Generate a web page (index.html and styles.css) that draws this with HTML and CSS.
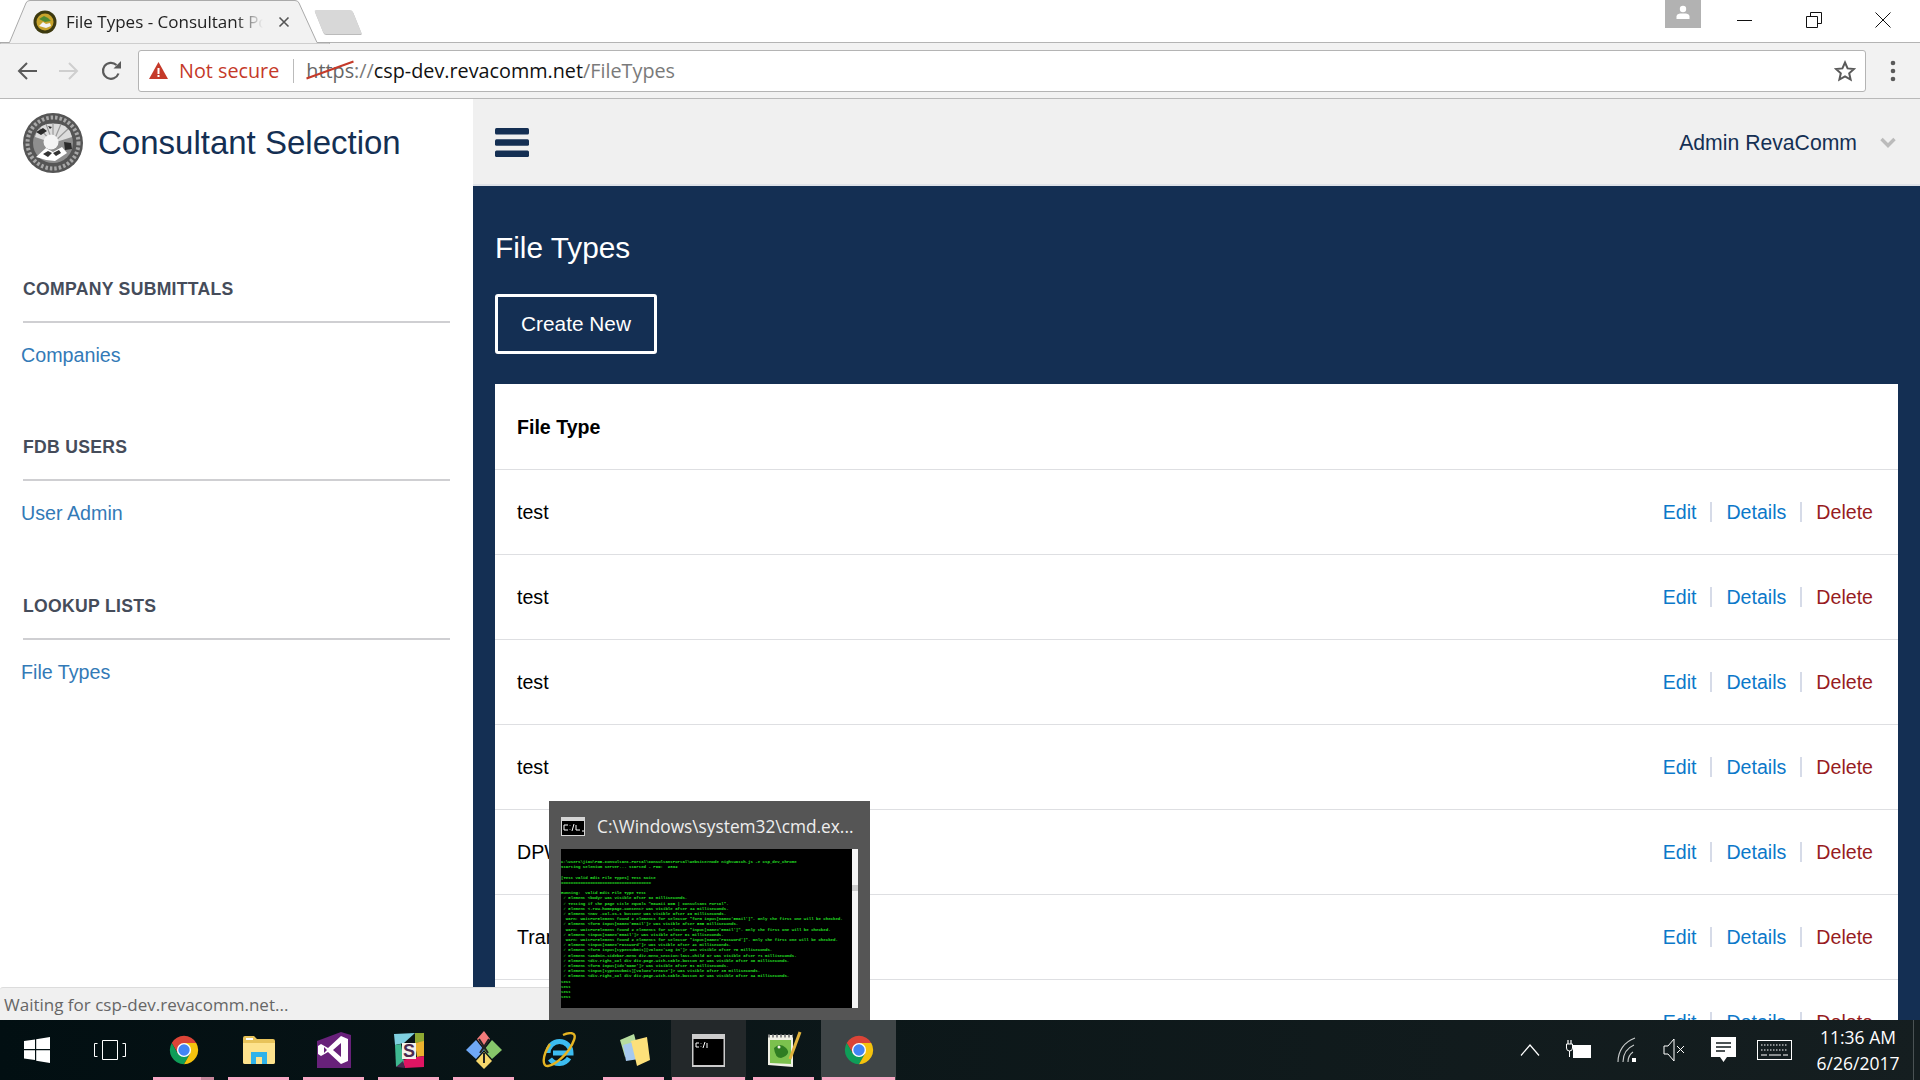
FILE: index.html
```html
<!DOCTYPE html>
<html lang="en">
<head>
  <meta charset="UTF-8">
  <title>File Types - Consultant Portal</title>
  <link rel="stylesheet" href="styles.css">
</head>
<body>
  <svg class="defs" width="0" height="0">
    <symbol id="chrome" viewBox="0 0 48 48">
      <path fill="#db4437" d="M6.68 14A20 20 0 0 1 41.32 14H24L15.34 29Z"/>
      <path fill="#0f9d58" d="M6.68 14A20 20 0 0 0 24 44L32.66 29H15.34Z"/>
      <path fill="#f4c20d" d="M41.32 14A20 20 0 0 1 24 44L32.66 29 24 14Z"/>
      <circle cx="24" cy="24" r="10" fill="#fff"/>
      <circle cx="24" cy="24" r="8" fill="#4285f4"/>
    </symbol>
  </svg>

  <div class="screen">
    <!-- Browser tabs -->
    <div class="tabstrip">
      <div class="tab">
        <svg class="tab-shape" width="330" height="44" viewBox="0 0 330 44">
          <path fill="#f2f2f2" stroke="#aaa" d="M0 42.5H9.5L26 3Q27 .5 30 .5H295Q298 .5 299 3L317 42.5H330V44H0Z"/>
        </svg>
        <svg class="favicon" width="24" height="24" viewBox="0 0 24 24">
          <circle cx="12" cy="12" r="11.5" fill="#3d3a10"/>
          <circle cx="12" cy="12" r="8.5" fill="#c9a42c"/>
          <path fill="#4f8a33" d="M6 9l5-3 4 2 3 3-6 1z"/>
          <path fill="#f3f3f3" d="M6 16l4-4 3 2 4-1 1 3-5 2z"/>
        </svg>
        <span class="tab-title">File Types - Consultant Portal</span>
        <svg class="tab-close" width="12" height="12" viewBox="0 0 12 12"><path d="M1.5 1.5l9 9M10.5 1.5l-9 9" stroke="#555" stroke-width="1.6"/></svg>
      </div>
      <div class="newtab"></div>
      <div class="spacer"></div>
      <div class="profile">
        <svg width="16" height="14" viewBox="0 0 16 14"><circle cx="8" cy="4" r="3.2" fill="#fff"/><path fill="#fff" d="M1.5 14V11.5Q1.5 9 5 8.5H11Q14.5 9 14.500 11.5V14Z"/></svg>
      </div>
      <div class="winbtns">
        <svg width="16" height="16" viewBox="0 0 16 16"><path d="M0 8.5H15" stroke="#111"/></svg>
        <svg width="16" height="16" viewBox="0 0 16 16"><path d="M.5 4.5H11.5V15.5H.5ZM4.5 4.5V.5H15.5V11.5H11.5" fill="none" stroke="#111"/></svg>
        <svg width="16" height="16" viewBox="0 0 16 16"><path d="M.5.5L15.5 15.5M15.5.5L.5 15.5" stroke="#111"/></svg>
      </div>
    </div>

    <!-- Browser toolbar -->
    <div class="toolbar">
      <svg class="nav-icon" width="22" height="22" viewBox="0 0 22 22"><path d="M21 11H3M11 3l-8 8 8 8" fill="none" stroke="#5a5a5a" stroke-width="2"/></svg>
      <svg class="nav-icon" width="22" height="22" viewBox="0 0 22 22"><path d="M1 11H19M11 3l8 8-8 8" fill="none" stroke="#cfcfcf" stroke-width="2"/></svg>
      <svg class="nav-icon" width="22" height="22" viewBox="0 0 22 22"><path d="M18.5 13.5A8 8 0 1 1 16.5 5" fill="none" stroke="#5a5a5a" stroke-width="2.2"/><path fill="#5a5a5a" d="M13.5 8.5H21V1Z"/></svg>
      <div class="omnibox">
        <svg width="19" height="17" viewBox="0 0 19 17"><path fill="#c53929" d="M9.5 0L19 17H0Z"/><path fill="#fff" d="M8.5 6h2v6h-2zM8.5 13h2v2h-2z"/></svg>
        <span class="not-secure">Not secure</span>
        <span class="omni-sep"></span>
        <span class="url"><span class="scheme">https</span><span class="dim">://</span>csp-dev.revacomm.net<span class="dim">/FileTypes</span></span>
        <svg class="star" width="22" height="22" viewBox="0 0 22 22"><path d="M11 2.5l2.6 5.9 6.4.6-4.8 4.3 1.4 6.3L11 16.4l-5.6 3.2 1.4-6.3L2 9l6.4-.6z" fill="none" stroke="#5a5a5a" stroke-width="2"/></svg>
      </div>
      <svg class="menu-dots" width="6" height="22" viewBox="0 0 6 22"><circle cx="3" cy="3" r="2.3" fill="#5a5a5a"/><circle cx="3" cy="11" r="2.3" fill="#5a5a5a"/><circle cx="3" cy="19" r="2.3" fill="#5a5a5a"/></svg>
    </div>

    <!-- The page -->
    <div class="page">
      <aside class="sidebar">
        <div class="brand">
          <svg class="seal" width="60" height="60" viewBox="0 0 60 60">
            <circle cx="30" cy="30" r="30" fill="#555"/>
            <circle cx="30" cy="30" r="25.500" fill="none" stroke="#a8a8a8" stroke-width="4" stroke-dasharray="2.500 2"/>
            <circle cx="30" cy="30" r="20" fill="#8e8e8e"/>
            <path fill="#dcdcdc" d="M30 30L12 24 14 18 19 13 24 11 36 11 42 13 47 18 49 24Z"/>
            <path d="M30 30L16 15M30 30L23 11M30 30L30 10M30 30L38 11M30 30L45 16" stroke="#9a9a9a" stroke-width="1.2"/>
            <path fill="#2b2b2b" d="M13 19l7-4 4 3-6 4zM25 13l4 1-2 2zM41 29l7 1 1 6-7 1z"/>
            <circle cx="28" cy="29" r="7.500" fill="#f4f4f4"/>
            <path fill="#fff" d="M13 44l10-9 7 4 9-5 5 6-12 8-9-1z"/>
            <path fill="#333" d="M20 41l5-3 4 2-4 4zM30 40l6-3 2 3-5 3z"/>
          </svg>
          <span class="brand-name">Consultant Selection</span>
        </div>

        <section class="nav-section">
          <h3>COMPANY SUBMITTALS</h3>
          <a href="#">Companies</a>
        </section>
        <section class="nav-section">
          <h3>FDB USERS</h3>
          <a href="#">User Admin</a>
        </section>
        <section class="nav-section">
          <h3>LOOKUP LISTS</h3>
          <a href="#">File Types</a>
        </section>
      </aside>

      <main class="main">
        <div class="topbar">
          <svg class="burger" width="34" height="29" viewBox="0 0 34 29">
            <rect width="34" height="6.4" rx="1.5" fill="#142f53"/>
            <rect y="11.3" width="34" height="6.4" rx="1.5" fill="#142f53"/>
            <rect y="22.6" width="34" height="6.4" rx="1.5" fill="#142f53"/>
          </svg>
          <span class="user-name">Admin RevaComm</span>
          <svg class="user-chevron" width="16" height="11" viewBox="0 0 16 11"><path d="M1.5 2l6.5 6.5L14.5 2" fill="none" stroke="#bbb" stroke-width="3.4"/></svg>
        </div>

        <div class="content">
          <h1>File Types</h1>
          <a class="btn-create" href="#">Create New</a>

          <div class="card">
            <div class="row row-head">File Type</div>
            <div class="row"><span>test</span><span class="actions"><a href="#">Edit</a><i></i><a href="#">Details</a><i></i><a class="del" href="#">Delete</a></span></div>
            <div class="row"><span>test</span><span class="actions"><a href="#">Edit</a><i></i><a href="#">Details</a><i></i><a class="del" href="#">Delete</a></span></div>
            <div class="row"><span>test</span><span class="actions"><a href="#">Edit</a><i></i><a href="#">Details</a><i></i><a class="del" href="#">Delete</a></span></div>
            <div class="row"><span>test</span><span class="actions"><a href="#">Edit</a><i></i><a href="#">Details</a><i></i><a class="del" href="#">Delete</a></span></div>
            <div class="row"><span>DPW</span><span class="actions"><a href="#">Edit</a><i></i><a href="#">Details</a><i></i><a class="del" href="#">Delete</a></span></div>
            <div class="row"><span>Transcript</span><span class="actions"><a href="#">Edit</a><i></i><a href="#">Details</a><i></i><a class="del" href="#">Delete</a></span></div>
            <div class="row"><span></span><span class="actions"><a href="#">Edit</a><i></i><a href="#">Details</a><i></i><a class="del" href="#">Delete</a></span></div>
          </div>
        </div>
      </main>
    </div>

    <!-- Status bubble -->
    <div class="status">Waiting for csp-dev.revacomm.net...</div>

    <!-- Taskbar thumbnail -->
    <div class="preview">
      <div class="preview-title">
        <svg width="24" height="19" viewBox="0 0 24 19">
          <rect width="24" height="19" fill="#d5d5d5"/>
          <rect x="1" y="4" width="22" height="14" fill="#000"/>
          <path d="M3 8H7M3 8V13H7M9 8.500V9M9 12V12.500M13 7L11 14M15 8V13H19M21 14H23" stroke="#fff" fill="none"/>
        </svg>
        <span>C:\Windows\system32\cmd.ex...</span>
      </div>
      <div class="console">
        <pre>c:\Users\jiau\POB-Consultant-Portal\ConsultantPortal\Website>node nightwatch.js -e csp_dev_chrome
Starting selenium server... started - PID:  2892

[Test Valid Edit File Types] Test Suite
=====================================

Running:  Valid Edit File Type Test
 ✓ Element &lt;body&gt; was visible after 93 milliseconds.
 ✓ Testing if the page title equals "Hawaii DOB | Consultant Portal".
 ✓ Element &lt;.row.homepage-content&gt; was visible after 34 milliseconds.
 ✓ Element &lt;nav .col-xs-1 button&gt; was visible after 29 milliseconds.
  Warn: WaitForElement found 2 elements for selector "form input[name='Email']". Only the first one will be checked.
 ✓ Element &lt;form input[name='Email']&gt; was visible after 585 milliseconds.
  Warn: WaitForElement found 2 elements for selector "input[name='Email']". Only the first one will be checked.
 ✓ Element &lt;input[name='Email']&gt; was visible after 61 milliseconds.
  Warn: WaitForElement found 2 elements for selector "input[name='Password']". Only the first one will be checked.
 ✓ Element &lt;input[name='Password']&gt; was visible after 41 milliseconds.
 ✓ Element &lt;form input[type=submit][value='Log in']&gt; was visible after 70 milliseconds.
 ✓ Element &lt;#admin-sidebar-menu div.menu_section:last-child a&gt; was visible after 71 milliseconds.
 ✓ Element &lt;div.right_col div div.page-with-table-button a&gt; was visible after 30 milliseconds.
 ✓ Element &lt;form input[id='Name']&gt; was visible after 81 milliseconds.
 ✓ Element &lt;input[type=submit][value='Create']&gt; was visible after 38 milliseconds.
 ✓ Element &lt;div.right_col div div.page-with-table-button a&gt; was visible after 34 milliseconds.
test
test
test
test</pre>
        <div class="console-scroll"><span class="console-thumb"></span></div>
      </div>
    </div>

    <!-- Windows taskbar -->
    <footer class="taskbar">
      <div class="sys-btn">
        <svg width="26" height="26" viewBox="0 0 26 26"><path fill="#fff" d="M0 4l11-1.6V12H0zM12.2 2.2L26 0V12H12.2zM0 13.2H11V23L0 21.4zM12.2 13.2H26V26L12.2 23.8z"/></svg>
      </div>
      <div class="sys-btn">
        <svg width="32" height="20" viewBox="0 0 32 20"><path d="M8.5.5H23.5V19.5H8.5ZM3.5 3.5H.5V16.5H3.5M28.5 3.5H31.5V16.5H28.5" fill="none" stroke="#fff"/></svg>
      </div>

      <div class="app running stacked">
        <svg width="34" height="34"><use href="#chrome"/></svg>
      </div>
      <div class="app running">
        <svg width="32" height="28" viewBox="0 0 32 28">
          <path fill="#e8c35a" d="M0 2Q0 0 2 0H11L14 3H30Q32 3 32 5V26Q32 28 30 28H2Q0 28 0 26Z"/>
          <path fill="#fde28d" d="M0 7H32V26Q32 28 30 28H2Q0 28 0 26Z"/>
          <path fill="#fff" d="M3 2H10V4H3Z"/>
          <path fill="#2fb2ea" d="M8 28V16H24V28H19V21H13V28Z"/>
        </svg>
      </div>
      <div class="app running">
        <svg width="34" height="36" viewBox="0 0 34 36">
          <path fill="#68217a" d="M0 9L24 0 34 3V36H0Z"/>
          <path fill="#fff" d="M4 12L11 16 24 4 31 7V29L24 32 11 20 4 24 1 22V14ZM7 15V21L10 18ZM24 11L16 18 24 25Z"/>
        </svg>
      </div>
      <div class="app running">
        <svg width="32" height="36" viewBox="0 0 32 36">
          <path fill="#7fd0e0" d="M1 2L22 1 11 11 2 13Z"/>
          <path fill="#8ea832" d="M22 1L31 1V10L22 11Z"/>
          <path fill="#ecb22e" d="M22 11L31 9V24L24 25Z"/>
          <path fill="#e01563" d="M9 28L24 25 31 24 31 35 12 36Z"/>
          <path fill="#3eb890" d="M2 13L8 12 11 31 3 35Z"/>
          <path fill="#4a2a4f" d="M3 35L10 29 12 36Z"/>
          <rect x="9" y="11" width="14" height="16" fill="#f4f1ea"/>
          <text class="slack-s" x="16" y="25">S</text>
        </svg>
      </div>
      <div class="app running">
        <svg width="36" height="38" viewBox="0 0 36 38">
          <path fill="#f27b7b" d="M18 0L24 8 18 17 11 8Z"/>
          <path fill="#86c66a" d="M26 9L36 19 26 28 18 19Z"/>
          <path fill="#6fa8f5" d="M10 9L18 19 10 28 0 19Z"/>
          <path fill="#f6d76c" d="M18 21L26 30 18 38 10 30Z"/>
          <path d="M13 8L22 22M23 8L14 22M18 22V32" stroke="#222" stroke-width="2" fill="none"/>
        </svg>
      </div>
      <div class="app">
        <svg width="36" height="36" viewBox="0 0 36 36">
          <path d="M7 21A11.5 11.5 0 1 1 30 21H12M28 26A11.5 11.5 0 0 1 9 27" fill="none" stroke="#3cbcf0" stroke-width="5"/>
          <path d="M9 12C1 24 1 35 7 34 14 33 28 22 33 8 36 0 29 0 22 3" fill="none" stroke="#e6b422" stroke-width="2.4"/>
        </svg>
      </div>
      <div class="app running">
        <svg width="34" height="34" viewBox="0 0 34 34">
          <path fill="#b6dd9f" d="M3 7L17 1 21 16 8 24Z"/>
          <path fill="#a6c9ee" d="M6 12L20 8 22 26 9 28Z"/>
          <path fill="#fde07a" d="M14 8L30 4 33 27 20 33Z"/>
        </svg>
      </div>
      <div class="app running active-dim">
        <svg width="33" height="33" viewBox="0 0 33 33">
          <rect width="33" height="33" fill="#ccc"/>
          <rect x="1.5" y="5" width="30" height="26" fill="#000"/>
          <path d="M4 9H7M4 9V13H7M9 9.500V10M9 12V12.500M13 8L11 14M15 9V14" stroke="#fff" fill="none"/>
        </svg>
      </div>
      <div class="app running">
        <svg width="36" height="38" viewBox="0 0 36 38">
          <path fill="#f1f1e6" d="M2 4H27V36L2 34Z"/>
          <path fill="#7cc14e" d="M4 9H25V33L4 32Z"/>
          <path d="M8 17Q14 11 20 17T15 27Q9 27 8 17Z" fill="#2f7d22"/>
          <circle cx="13" cy="16" r="1.500" fill="#f1f1e6"/>
          <path d="M2 5H27" stroke="#888" stroke-dasharray="2 2" stroke-width="3"/>
          <path d="M24 28L34 1" stroke="#e0b23c" stroke-width="3"/>
        </svg>
      </div>
      <div class="app running active">
        <svg width="34" height="34"><use href="#chrome"/></svg>
      </div>

      <div class="spacer"></div>

      <div class="tray">
        <svg width="20" height="12" viewBox="0 0 20 12"><path d="M1 11.5L10 1l9 10.5" fill="none" stroke="#fff" stroke-width="1.2"/></svg>
        <svg width="25" height="20" viewBox="0 0 25 20"><rect x="7" y="5" width="18" height="13" fill="#fff"/><path d="M2 0V4M5 0V4" stroke="#fff" stroke-width="1.2"/><path d="M.5 4H6.500V8Q6.500 11 3.500 11T.5 8ZM3.500 11V17" fill="#111a1c" stroke="#fff"/></svg>
        <svg width="20" height="26" viewBox="0 0 20 26"><path d="M1 25C1 14 7 5 18 1M6 25C6 17 10 11 17 8M11 25C11 20 13 17 16 15" fill="none" stroke="#c9cccc" stroke-width="1.1"/><rect x="15" y="21" width="4" height="4" fill="#fff"/></svg>
        <svg width="22" height="26" viewBox="0 0 22 26"><path d="M1 9H5L11 2V24L5 17H1Z" fill="none" stroke="#fff"/><path d="M14 9L21 16M21 9L14 16" stroke="#fff"/></svg>
        <svg width="25" height="26" viewBox="0 0 25 26"><path fill="#fff" d="M0 0H25V20H16L12.500 25 9 20H0Z"/><path d="M5 6H20M5 10H20M5 14H14" stroke="#111a1c" stroke-width="1.3"/></svg>
        <svg class="tray-kbd" width="35" height="20" viewBox="0 0 35 20"><rect x=".5" y=".5" width="34" height="19" fill="none" stroke="#fff"/><path d="M4 5H31M4 10H31" stroke="#fff" stroke-dasharray="1.500 1.500" stroke-width="1.2"/><path d="M4 15H10M12 15H24M26 15H31" stroke="#fff"/></svg>
      </div>
      <div class="clock">
        <span>11:36 AM</span>
        <span>6/26/2017</span>
      </div>
      <div class="show-desktop"></div>
    </footer>
  </div>
</body>
</html>
```

FILE: styles.css
```css
/* Basic page setup */
html, body {
  margin: 0;
  padding: 0;
  height: 100%;
  overflow: hidden;
}

body {
  font-family: "Liberation Sans", Arial, sans-serif;
  background-color: #fff;
  color: #000;
}

a {
  text-decoration: none;
}

.defs {
  display: block;
  height: 0;
}

.spacer {
  flex: 1;
}

.screen {
  position: relative;
  display: flex;
  flex-direction: column;
  width: 1920px;
  height: 1080px;
  overflow: hidden;
}

/* Browser tabs */
.tabstrip {
  display: flex;
  align-items: flex-start;
  height: 43px;
  box-sizing: border-box;
  border-bottom: 1px solid #b4b4b4;
  background-color: #fff;
}

.tab {
  position: relative;
  display: flex;
  align-items: center;
  width: 314px;
  height: 44px;
  flex: none;
  font-family: "Open Sans", sans-serif;
  font-size: 17px;
  color: #222;
}

.tab-shape {
  position: absolute;
  top: 0;
  left: 0;
}

.favicon {
  position: relative;
  margin-left: 33px;
  margin-top: -1px;
  flex: none;
}

.tab-title {
  position: relative;
  width: 197px;
  margin-left: 9px;
  margin-top: -2px;
  overflow: hidden;
  white-space: nowrap;
  -webkit-mask-image: linear-gradient(to right, #000 86%, transparent 100%);
  mask-image: linear-gradient(to right, #000 86%, transparent 100%);
}

.tab-close {
  position: relative;
  margin-left: 15px;
  margin-top: -1px;
}

.newtab {
  width: 38px;
  height: 24px;
  margin: 10px 0 0 5px;
  flex: none;
  border-radius: 2px;
  background-color: #d8d8d8;
  transform: skewX(22deg);
  box-shadow: 0 1px 0 #bbb;
}

.profile {
  display: flex;
  align-items: flex-start;
  justify-content: center;
  width: 36px;
  height: 28px;
  padding-top: 5px;
  box-sizing: border-box;
  background-color: #b2b2b2;
}

.winbtns {
  display: flex;
  align-items: center;
  gap: 53px;
  height: 42px;
  margin: 0 29px 0 36px;
  padding-bottom: 2px;
  box-sizing: border-box;
}

/* Browser toolbar */
.toolbar {
  display: flex;
  align-items: center;
  height: 56px;
  box-sizing: border-box;
  padding-left: 16px;
  border-bottom: 1px solid #b9b9b9;
  background-color: #f2f2f2;
}

.nav-icon {
  flex: none;
  margin-right: 20px;
}

.nav-icon:nth-child(3) {
  margin-right: 16px;
}

.omnibox {
  display: flex;
  align-items: center;
  width: 1728px;
  height: 42px;
  flex: none;
  box-sizing: border-box;
  padding: 0 9px 0 10px;
  border: 1px solid #b4b4b4;
  border-radius: 3px;
  background-color: #fff;
  font-family: "Open Sans", sans-serif;
  font-size: 19.8px;
}

.not-secure {
  margin-left: 11px;
  color: #c53929;
}

.omni-sep {
  width: 1px;
  height: 24px;
  margin: 0 12px 0 14px;
  background-color: #bbb;
}

.url {
  flex: 1;
  color: #111;
  white-space: nowrap;
}

.url .dim {
  color: #7a7a7a;
}

.scheme {
  position: relative;
  color: #666;
}

.scheme::after {
  content: "";
  position: absolute;
  left: -1px;
  top: 12px;
  width: 50px;
  height: 2px;
  background-color: #c53929;
  transform: rotate(-20deg);
}

.menu-dots {
  margin-left: 24px;
}

/* Page layout */
.page {
  display: flex;
  flex: 1;
  min-height: 0;
}

.sidebar {
  width: 473px;
  flex: none;
  box-sizing: border-box;
  padding: 0 23px;
  background-color: #fff;
}

.brand {
  display: flex;
  align-items: center;
  height: 178px;
  padding-bottom: 90px;
  box-sizing: border-box;
  gap: 15px;
}

.seal {
  filter: blur(0.6px);
}

.brand-name {
  font-size: 33px;
  color: #142f53;
}

.nav-section {
  height: 158.4px;
}

.nav-section h3 {
  margin: 0 0 20px;
  padding-bottom: 20px;
  border-bottom: 2px solid #cfcfd2;
  font-size: 17.6px;
  letter-spacing: 0.3px;
  line-height: 24px;
  color: #454c5a;
}

.nav-section a {
  display: block;
  margin-left: -2px;
  font-size: 19.7px;
  line-height: 24px;
  color: #337ab7;
}

/* Main column */
.main {
  display: flex;
  flex: 1;
  flex-direction: column;
  min-width: 0;
  background-color: #142f53;
}

.topbar {
  display: flex;
  align-items: center;
  height: 87px;
  flex: none;
  box-sizing: border-box;
  padding: 2px 24px 0 22px;
  border-bottom: 2px solid #dfe2e8;
  background-color: #f0f0f0;
}

.user-name {
  margin-left: auto;
  font-size: 21.2px;
  color: #142f53;
}

.user-chevron {
  margin-left: 23px;
}

.content {
  padding: 45px 22px 0;
  overflow: hidden;
}

.content h1 {
  margin: 0 0 29px;
  font-size: 29.8px;
  font-weight: normal;
  line-height: 34px;
  color: #fff;
}

.btn-create {
  display: block;
  width: 162px;
  height: 60px;
  box-sizing: border-box;
  border: 3px solid #fff;
  border-radius: 3px;
  font-size: 20.8px;
  line-height: 54px;
  text-align: center;
  color: #fff;
}

.card {
  margin-top: 30px;
  background-color: #fff;
}

.row {
  display: flex;
  align-items: center;
  justify-content: space-between;
  height: 85px;
  box-sizing: border-box;
  padding: 0 25px 0 22px;
  border-bottom: 1px solid #dedfe2;
  font-size: 19.6px;
}

.row-head {
  height: 86px;
  padding-top: 1px;
  font-weight: bold;
}

.actions {
  display: flex;
  align-items: center;
}

.actions a {
  color: #0b78c9;
}

.actions a.del {
  color: #971c22;
}

.actions i {
  width: 2px;
  height: 20px;
  margin: 0 14px;
  background-color: #d6dbe8;
}

/* Status bubble */
.status {
  position: absolute;
  left: 0;
  top: 987px;
  width: 549px;
  height: 33px;
  box-sizing: border-box;
  padding-left: 4px;
  border-top: 1px solid #dcdcdc;
  border-top-left-radius: 3px;
  background-color: #f0f0f0;
  font-family: "Open Sans", sans-serif;
  font-size: 17px;
  line-height: 33px;
  color: #666;
}

/* Taskbar thumbnail */
.preview {
  position: absolute;
  left: 549px;
  top: 801px;
  width: 321px;
  height: 219px;
  box-sizing: border-box;
  padding: 0 12px;
  background-color: #555;
}

.preview-title {
  display: flex;
  align-items: center;
  gap: 12px;
  height: 48px;
  padding-top: 2px;
  box-sizing: border-box;
  font-family: "Open Sans", sans-serif;
  font-size: 17.3px;
  color: #eee;
  white-space: nowrap;
}

.preview-title svg {
  flex: none;
}

.console {
  position: relative;
  height: 159px;
  overflow: hidden;
  background-color: #000;
}

.console pre {
  margin: 0;
  padding-top: 11px;
  font-family: "Liberation Mono", monospace;
  font-size: 4.05px;
  font-weight: bold;
  line-height: 5.2px;
  color: #25e025;
}

.console-scroll {
  position: absolute;
  top: 0;
  right: 0;
  bottom: 0;
  width: 6px;
  background-color: #f4f4f4;
}

.console-thumb {
  display: block;
  height: 6px;
  margin-top: 36px;
  background-color: #cdcdcd;
}

/* Windows taskbar */
.taskbar {
  display: flex;
  align-items: center;
  height: 60px;
  flex: none;
  background: linear-gradient(to right, #020f12 0%, #0c1719 45%, #151e20 100%);
}

.sys-btn {
  display: flex;
  align-items: center;
  justify-content: center;
  width: 73px;
  height: 60px;
  flex: none;
}

.app {
  position: relative;
  display: flex;
  align-items: center;
  justify-content: center;
  width: 75px;
  height: 60px;
  flex: none;
}

/* pink line under a running app */
.app.running::after {
  content: "";
  position: absolute;
  left: 7px;
  right: 7px;
  bottom: 0;
  height: 3px;
  background-color: #f7a8c4;
}

.app.stacked::before {
  content: "";
  position: absolute;
  left: 55px;
  width: 13px;
  bottom: 0;
  height: 3px;
  z-index: 1;
  background-color: #c7879c;
}

.app.active-dim {
  background-color: #23282a;
}

.app.active {
  background-color: #3f4547;
}

.app.active-dim::after,
.app.active::after {
  left: 1px;
  right: 1px;
}

.slack-s {
  font-family: "Liberation Sans", sans-serif;
  font-size: 18px;
  font-weight: bold;
  text-anchor: middle;
  fill: #4a2a4f;
}

.tray {
  display: flex;
  align-items: center;
  gap: 26px;
  padding-right: 24px;
}

.tray-kbd {
  margin-left: -5px;
}

.clock {
  display: flex;
  flex-direction: column;
  align-items: center;
  gap: 5px;
  width: 84px;
  font-family: "Open Sans", sans-serif;
  font-size: 17.5px;
  line-height: 21px;
  color: #fff;
  white-space: nowrap;
}

.show-desktop {
  width: 1px;
  height: 60px;
  margin: 0 6px 0 13px;
  background-color: #4a5254;
}
```
